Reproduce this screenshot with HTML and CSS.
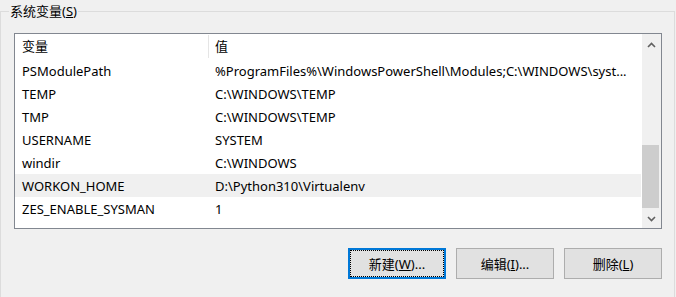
FILE: index.html
```html
<!DOCTYPE html>
<html lang="zh-CN">

<head>
    <meta charset="UTF-8" />
    <meta name="viewport" content="width=device-width, initial-scale=1.0" />
    <title>系统变量</title>
    <link rel="stylesheet" href="styles.css">
</head>

<body>
    <div class="group">
        <div class="group-title">系统变量(<u>S</u>)</div>

        <div class="listbox">
            <div class="table">
                <div class="row header">
                    <div class="cell name">变量</div>
                    <div class="cell value">值</div>
                </div>
                <div class="row">
                    <div class="cell name">PSModulePath</div>
                    <div class="cell value">%ProgramFiles%\WindowsPowerShell\Modules;C:\WINDOWS\syst...</div>
                </div>
                <div class="row">
                    <div class="cell name">TEMP</div>
                    <div class="cell value">C:\WINDOWS\TEMP</div>
                </div>
                <div class="row">
                    <div class="cell name">TMP</div>
                    <div class="cell value">C:\WINDOWS\TEMP</div>
                </div>
                <div class="row">
                    <div class="cell name">USERNAME</div>
                    <div class="cell value">SYSTEM</div>
                </div>
                <div class="row">
                    <div class="cell name">windir</div>
                    <div class="cell value">C:\WINDOWS</div>
                </div>
                <div class="row hover">
                    <div class="cell name">WORKON_HOME</div>
                    <div class="cell value">D:\Python310\Virtualenv</div>
                </div>
                <div class="row">
                    <div class="cell name">ZES_ENABLE_SYSMAN</div>
                    <div class="cell value">1</div>
                </div>
            </div>

            <div class="scrollbar">
                <div class="scroll-btn">
                    <svg width="9" height="6" viewBox="0 0 9 6"><path d="M1 5 L4.5 1.5 L8 5" fill="none" stroke="#606060" stroke-width="1.6"/></svg>
                </div>
                <div class="track">
                    <div class="thumb"></div>
                </div>
                <div class="scroll-btn down">
                    <svg width="9" height="6" viewBox="0 0 9 6"><path d="M1 1 L4.5 4.5 L8 1" fill="none" stroke="#606060" stroke-width="1.6"/></svg>
                </div>
            </div>
        </div>

        <div class="actions">
            <button class="focused">新建(<u>W</u>)...</button>
            <button>编辑(<u>I</u>)...</button>
            <button>删除(<u>L</u>)</button>
        </div>
    </div>
</body>

</html>
```

FILE: styles.css
```css
* {
    box-sizing: border-box;
    margin: 0;
    padding: 0;
}

body {
    font-family: "Noto Sans", "Noto Sans CJK SC", sans-serif;
    font-size: 13px;
    color: #000;
    background: #f0f0f0;
    width: 676px;
    height: 297px;
    overflow: hidden;
}

.group {
    margin-top: 11px;
    width: 675px;
    height: 300px;
    border: 1px solid #dcdcdc;
    border-bottom: none;
}

.group-title {
    display: inline-block;
    margin: -10px 0 0 8px;
    padding: 0 1px;
    background: #f0f0f0;
    line-height: 18px;
    vertical-align: top;
}

.listbox {
    display: flex;
    margin: 3px 0 0 13px;
    width: 648px;
    height: 196px;
    border: 1px solid #828790;
    background: #fff;
}

.table {
    width: 626px;
    margin-right: 1px;
}

.row {
    display: flex;
    height: 23px;
    align-items: center;
}

.row.header {
    height: 25px;
}

.row.hover {
    background: #f0f0f0;
}

.cell {
    white-space: nowrap;
    overflow: hidden;
}

.cell.name {
    width: 194px;
    padding-left: 7px;
}

.cell.value {
    flex: 1;
    padding-left: 6px;
}

.header .cell {
    height: 23px;
    line-height: 23px;
}

.header .cell.name {
    border-right: 1px solid #e5e5e5;
}

.scrollbar {
    width: 19px;
    display: flex;
    flex-direction: column;
    background: #f0f0f0;
}

.scroll-btn {
    height: 21px;
    display: flex;
    align-items: center;
    justify-content: center;
}

.scroll-btn.down {
    height: 19px;
}

.track {
    flex: 1;
}

.thumb {
    margin-top: 90px;
    width: 17px;
    height: 63px;
    background: #cdcdcd;
}

.actions {
    display: flex;
    justify-content: flex-end;
    gap: 10px;
    width: 661px;
    margin-top: 19px;
}

button {
    width: 98px;
    height: 31px;
    font-family: inherit;
    font-size: 13px;
    color: #000;
    background: #e1e1e1;
    border: 1px solid #adadad;
}

button.focused {
    border: 2px solid #0078d7;
    outline: 1px dotted #000;
    outline-offset: -3px;
}
```
